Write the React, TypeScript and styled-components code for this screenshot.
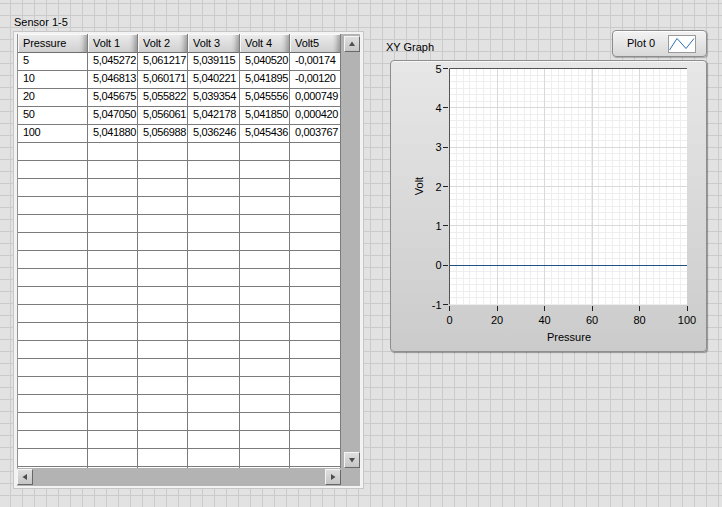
import React from 'react';
import styled, { createGlobalStyle } from 'styled-components';

interface Column {
    title: string;
    width: number;
}

const columns: Column[] = [
    { title: 'Pressure', width: 70 },
    { title: 'Volt 1', width: 50 },
    { title: 'Volt 2', width: 50 },
    { title: 'Volt 3', width: 52 },
    { title: 'Volt 4', width: 50 },
    { title: 'Volt5', width: 51 },
];

const data: string[][] = [
    ['5', '5,045272', '5,061217', '5,039115', '5,040520', '-0,00174'],
    ['10', '5,046813', '5,060171', '5,040221', '5,041895', '-0,00120'],
    ['20', '5,045675', '5,055822', '5,039354', '5,045556', '0,000749'],
    ['50', '5,047050', '5,056061', '5,042178', '5,041850', '0,000420'],
    ['100', '5,041880', '5,056988', '5,036246', '5,045436', '0,003767'],
];

const TOTAL_ROWS = 24;

// plot geometry (inside the graph panel)
const PLOT = { left: 58.5, top: 7.5, right: 296, bottom: 243.5 };
const xPos = (v: number) => PLOT.left + (v / 100) * (PLOT.right - PLOT.left);
const yPos = (v: number) => PLOT.top + ((5 - v) / 6) * (PLOT.bottom - PLOT.top);

const GlobalStyle = createGlobalStyle`
    html, body {
        margin: 0;
        padding: 0;
    }
    body {
        min-height: 100vh;
        background-color: #e2e2e2;
        background-image:
            linear-gradient(to right, #cbcbcb 1px, transparent 1px),
            linear-gradient(to bottom, #cbcbcb 1px, transparent 1px);
        background-size: 12px 12px;
        background-position: 10px 3px;
        font-family: 'Liberation Sans', Arial, sans-serif;
        font-size: 11px;
        color: #000;
    }
`;

const FrontPanel = styled.div`
    display: flex;
    align-items: flex-start;
    gap: 22px;
    padding: 16px 0 0 13px;
`;

const TableBlock = styled.div`
    display: flex;
    flex-direction: column;
`;

const Caption = styled.div`
    height: 13px;
    line-height: 13px;
    margin: 0 0 2px 1px;
    white-space: nowrap;
`;

const Frame = styled.div`
    box-sizing: border-box;
    width: 351px;
    padding: 2px 3px;
    background: #f3f3f3;
    border: 1px solid #c6c6c6;
    display: grid;
    grid-template-columns: 324px 19px;
    grid-template-rows: 434px 18px;
`;

const Table = styled.div`
    display: flex;
    flex-direction: column;
    overflow: hidden;
    background: #fff;
    border-left: 1px solid #8f8f8f;
`;

const Row = styled.div`
    display: flex;
    flex: none;
`;

const Body = styled.div`
    height: 415px;
    overflow: hidden;
`;

const HeaderCell = styled.div<{ $w: number }>`
    box-sizing: border-box;
    width: ${(p) => p.$w}px;
    height: 19px;
    flex: none;
    padding-left: 5px;
    line-height: 18px;
    white-space: nowrap;
    overflow: hidden;
    letter-spacing: -0.1px;
    background: linear-gradient(to bottom, #ececec, #d0d0d0);
    border-right: 1px solid #7e7e7e;
    border-bottom: 1px solid #6e6e6e;
    box-shadow: inset 1px 1px 0 #f8f8f8, inset -7px 0 5px -4px rgba(0, 0, 0, 0.3);
`;

const Cell = styled.div<{ $w: number }>`
    box-sizing: border-box;
    width: ${(p) => p.$w}px;
    height: 18px;
    flex: none;
    padding-left: 5px;
    line-height: 15px;
    white-space: nowrap;
    overflow: hidden;
    letter-spacing: -0.35px;
    border-right: 1px solid #7b7b7b;
    border-bottom: 1px solid #7b7b7b;
`;

const Track = styled.div<{ $vertical?: boolean }>`
    background: #b3b3b3;
    display: flex;
    flex-direction: ${(p) => (p.$vertical ? 'column' : 'row')};
    justify-content: space-between;
    align-items: ${(p) => (p.$vertical ? 'flex-end' : 'flex-start')};
    padding-top: ${(p) => (p.$vertical ? 2 : 1)}px;
    box-sizing: border-box;
`;

const Corner = styled.div`
    background: #b3b3b3;
`;

const ScrollButton = styled.div`
    box-sizing: border-box;
    width: 16px;
    height: 16px;
    background: linear-gradient(to bottom, #dedede, #c6c6c6);
    border: 1px solid;
    border-color: #f5f5f5 #686868 #686868 #f5f5f5;
    display: flex;
    align-items: center;
    justify-content: center;
`;

const GraphBlock = styled.div`
    width: 321px;
    margin-top: 14px;
    display: flex;
    flex-direction: column;
`;

const TopRow = styled.div`
    height: 27px;
    display: flex;
    justify-content: space-between;
    align-items: flex-end;
`;

const GraphLabel = styled.div`
    line-height: 13px;
    margin-bottom: 3px;
    white-space: nowrap;
`;

const Legend = styled.div`
    box-sizing: border-box;
    width: 95px;
    height: 27px;
    display: flex;
    align-items: center;
    gap: 13px;
    padding-left: 14px;
    border: 1px solid #8d8d8d;
    border-radius: 4px;
    background: linear-gradient(to bottom, #f3f3f3, #d8d8d8);
    box-shadow: 1px 1px 1px rgba(0, 0, 0, 0.25), inset 0 1px 0 #ffffff;
    line-height: 13px;
`;

const PlotSwatch = styled.div`
    box-sizing: border-box;
    width: 28px;
    height: 18px;
    background: #fff;
    border: 1px solid #9a9a9a;
    display: flex;
`;

const GraphPanel = styled.div`
    box-sizing: border-box;
    width: 317px;
    height: 292px;
    margin: 3px 0 0 4px;
    border: 1px solid #8e8e8e;
    border-radius: 4px;
    background: linear-gradient(to bottom, #e7e7e7, #cbcbcb);
    box-shadow: 1px 1px 1px rgba(0, 0, 0, 0.35), inset 0 1px 0 #f7f7f7;
    display: flex;
`;

function Arrow({ dir }: { dir: 'up' | 'down' | 'left' | 'right' }) {
    const points = {
        up: '1,6 4,1.5 7,6',
        down: '1,2 4,6.5 7,2',
        left: '6,1 1.5,4 6,7',
        right: '2,1 6.5,4 2,7',
    }[dir];
    return (
        <svg width="8" height="8" viewBox="0 0 8 8">
            <polygon points={points} fill="#4d4d4d" />
        </svg>
    );
}

function SensorTable() {
    const rows = Array.from({ length: TOTAL_ROWS }, (_, i) => data[i] || columns.map(() => ''));
    return (
        <TableBlock>
            <Caption>Sensor 1-5</Caption>
            <Frame>
                <Table>
                    <Row>
                        {columns.map((col) => (
                            <HeaderCell key={col.title} $w={col.width}>{col.title}</HeaderCell>
                        ))}
                    </Row>
                    <Body>
                        {rows.map((row, r) => (
                            <Row key={r}>
                                {columns.map((col, c) => (
                                    <Cell key={col.title} $w={col.width}>{row[c]}</Cell>
                                ))}
                            </Row>
                        ))}
                    </Body>
                </Table>
                <Track $vertical>
                    <ScrollButton><Arrow dir="up" /></ScrollButton>
                    <ScrollButton><Arrow dir="down" /></ScrollButton>
                </Track>
                <Track>
                    <ScrollButton><Arrow dir="left" /></ScrollButton>
                    <ScrollButton><Arrow dir="right" /></ScrollButton>
                </Track>
                <Corner />
            </Frame>
        </TableBlock>
    );
}

function XYGraph() {
    const xTicks = [0, 20, 40, 60, 80, 100];
    const yTicks = [5, 4, 3, 2, 1, 0, -1];
    const minorX: number[] = [];
    for (let v = 0; v < 100; v += 20 / 7) minorX.push(v);
    const minorY: number[] = [];
    for (let v = -1; v < 5; v += 1 / 6) minorY.push(v);
    const snap = (n: number) => Math.round(n - 0.5) + 0.5;

    return (
        <GraphBlock>
            <TopRow>
                <GraphLabel>XY Graph</GraphLabel>
                <Legend>
                    <span>Plot 0</span>
                    <PlotSwatch>
                        <svg width="26" height="16" viewBox="0 0 26 16">
                            <polyline points="0.5,14 8,2.5 17,12.5 25,2.5" fill="none" stroke="#2c6db4" strokeWidth="1" />
                        </svg>
                    </PlotSwatch>
                </Legend>
            </TopRow>
            <GraphPanel>
                <svg width="315" height="290" viewBox="0 0 315 290" fontFamily="'Liberation Sans', Arial, sans-serif" fontSize="11">
                    <rect x={PLOT.left} y={PLOT.top} width={PLOT.right - PLOT.left} height={PLOT.bottom - PLOT.top} fill="#fff" />
                    {minorX.map((v) => (
                        <line key={'mx' + v} x1={snap(xPos(v))} x2={snap(xPos(v))} y1={PLOT.top} y2={PLOT.bottom} stroke="#eeeeee" />
                    ))}
                    {minorY.map((v) => (
                        <line key={'my' + v} x1={PLOT.left} x2={PLOT.right} y1={snap(yPos(v))} y2={snap(yPos(v))} stroke="#eeeeee" />
                    ))}
                    {xTicks.slice(1, -1).map((v) => (
                        <line key={'gx' + v} x1={snap(xPos(v))} x2={snap(xPos(v))} y1={PLOT.top} y2={PLOT.bottom} stroke="#d9d9d9" />
                    ))}
                    {yTicks.slice(1, -1).map((v) => (
                        <line key={'gy' + v} x1={PLOT.left} x2={PLOT.right} y1={snap(yPos(v))} y2={snap(yPos(v))} stroke="#d9d9d9" />
                    ))}
                    <line x1={PLOT.left} x2={PLOT.right} y1={PLOT.top} y2={PLOT.top} stroke="#555" />
                    <line x1={PLOT.left} x2={PLOT.left} y1={PLOT.top} y2={PLOT.bottom} stroke="#555" />
                    <line x1={PLOT.left} x2={PLOT.right} y1={snap(yPos(0))} y2={snap(yPos(0))} stroke="#1f5182" strokeWidth="1.2" />

                    {yTicks.map((v) => (
                        <g key={'ty' + v}>
                            <line x1={52} x2={57} y1={snap(yPos(v))} y2={snap(yPos(v))} stroke="#222" />
                            <text x={50.5} y={yPos(v) + 4} textAnchor="end">{v}</text>
                        </g>
                    ))}
                    {xTicks.map((v) => (
                        <g key={'tx' + v}>
                            <line x1={snap(xPos(v))} x2={snap(xPos(v))} y1={245} y2={250} stroke="#222" />
                            <text x={xPos(v)} y={263} textAnchor="middle">{v}</text>
                        </g>
                    ))}
                    <text x={178} y={280} textAnchor="middle">Pressure</text>
                    <text transform="translate(32,125) rotate(-90)" textAnchor="middle">Volt</text>
                </svg>
            </GraphPanel>
        </GraphBlock>
    );
}

export default function App() {
    return (
        <>
            <GlobalStyle />
            <FrontPanel>
                <SensorTable />
                <XYGraph />
            </FrontPanel>
        </>
    );
}
